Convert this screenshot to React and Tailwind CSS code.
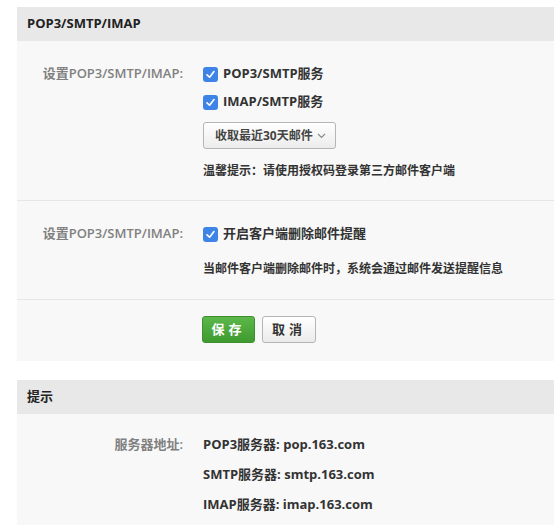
import React from "react";

const font = { fontFamily: '"Open Sans", "Noto Sans CJK SC", sans-serif' };

function Check() {
  return (
    <span className="flex h-[15px] w-[15px] shrink-0 items-center justify-center rounded-[3px] bg-[#3d84e6]">
      <svg width="11" height="11" viewBox="0 0 12 12" fill="none">
        <path d="M2.2 6.4 L5 9 L9.8 2.8" stroke="white" strokeWidth="1.8" strokeLinecap="round" strokeLinejoin="round" />
      </svg>
    </span>
  );
}

function Row({ label, children }) {
  return (
    <div className="flex">
      <div className="w-[166px] shrink-0 text-right text-[13px] font-semibold text-[#808080]">{label}</div>
      <div className="ml-[20px] flex flex-col">{children}</div>
    </div>
  );
}

export default function App() {
  return (
    <div className="min-h-[525px] bg-white pl-[17px] pt-[7px] text-[#333]" style={font}>
      <div className="bg-[#f8f8f8]">
        <div className="flex h-[34px] items-center bg-[#e8e8e8] px-[10px] text-[13px] font-bold text-[#222]">
          POP3/SMTP/IMAP
        </div>
        <div className="pt-[23px] pb-[20px]">
          <Row label="设置POP3/SMTP/IMAP:">
            <div className="flex h-[20px] items-center gap-[5px] text-[13px] font-bold">
              <Check />
              <span>POP3/SMTP服务</span>
            </div>
            <div className="mt-[8px] flex h-[20px] items-center gap-[5px] text-[13px] font-bold">
              <Check />
              <span>IMAP/SMTP服务</span>
            </div>
            <div className="mt-[10px] flex h-[27px] w-[133px] items-center justify-between whitespace-nowrap rounded-[3px] border border-[#b5b5b5] bg-gradient-to-b from-[#ffffff] to-[#ececec] pl-[11px] pr-[9px] text-[12px] font-bold text-[#444]">
              <span>收取最近30天邮件</span>
              <svg width="9" height="6" viewBox="0 0 9 6" fill="none">
                <path d="M1 1 L4.5 4.5 L8 1" stroke="#888" strokeWidth="1.1" />
              </svg>
            </div>
            <div className="mt-[13px] text-[12px] font-bold text-[#333]">温馨提示：请使用授权码登录第三方邮件客户端</div>
          </Row>
        </div>
        <div className="h-px bg-[#e6e6e6]" />
        <div className="pt-[23px] pb-[21px]">
          <Row label="设置POP3/SMTP/IMAP:">
            <div className="flex h-[20px] items-center gap-[5px] text-[13px] font-bold">
              <Check />
              <span>开启客户端删除邮件提醒</span>
            </div>
            <div className="mt-[16px] text-[12px] font-bold text-[#333]">当邮件客户端删除邮件时，系统会通过邮件发送提醒信息</div>
          </Row>
        </div>
        <div className="h-px bg-[#e6e6e6]" />
        <div className="flex gap-[7px] pl-[185px] pt-[16px] pb-[18px]">
          <button className="flex h-[27px] w-[53px] items-center justify-center rounded-[3px] border border-[#3e8f2e] bg-gradient-to-b from-[#5cb84a] to-[#3f9a2f] text-[13px] font-bold tracking-[4px] text-white">
            保存
          </button>
          <button className="flex h-[27px] w-[54px] items-center justify-center rounded-[3px] border border-[#b5b5b5] bg-gradient-to-b from-[#ffffff] to-[#ebebeb] text-[13px] font-bold tracking-[4px] text-[#333]">
            取消
          </button>
        </div>
      </div>

      <div className="mt-[19px] bg-[#f8f8f8]">
        <div className="flex h-[34px] items-center bg-[#e8e8e8] px-[10px] text-[13px] font-bold text-[#222]">
          提示
        </div>
        <div className="pt-[21px] pb-[12px]">
          <Row label="服务器地址:">
            <div className="flex h-[20px] items-center text-[13px] font-bold">POP3服务器: pop.163.com</div>
            <div className="mt-[10px] flex h-[20px] items-center text-[13px] font-bold">SMTP服务器: smtp.163.com</div>
            <div className="mt-[10px] flex h-[20px] items-center text-[13px] font-bold">IMAP服务器: imap.163.com</div>
          </Row>
        </div>
      </div>
    </div>
  );
}
